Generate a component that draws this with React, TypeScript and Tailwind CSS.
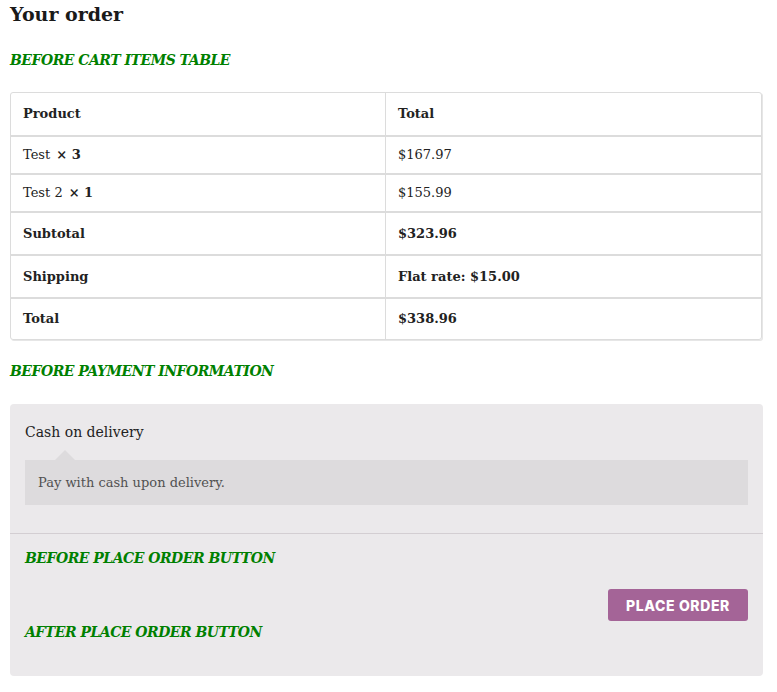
import React from "react";

const serif = { fontFamily: '"DejaVu Serif", "Liberation Serif", serif' };

function Hook({ children, className = "" }: { children: React.ReactNode; className?: string }) {
  return (
    <div className={`text-[14px] font-bold italic text-[#008000] tracking-[-0.5px] leading-[20px] ${className}`}>{children}</div>
  );
}

export default function App() {
  const rows: { l: React.ReactNode; r: React.ReactNode; bold?: boolean; h: string }[] = [
    { l: "Product", r: "Total", bold: true, h: "h-[42px]" },
    { l: <>Test <b className="ml-[6px]">× 3</b></>, r: "$167.97", h: "h-[38px]" },
    { l: <>Test 2 <b className="ml-[6px]">× 1</b></>, r: "$155.99", h: "h-[38px]" },
    { l: "Subtotal", r: "$323.96", bold: true, h: "h-[43px]" },
    { l: "Shipping", r: "Flat rate: $15.00", bold: true, h: "h-[43px]" },
    { l: "Total", r: "$338.96", bold: true, h: "h-[42px]" },
  ];
  return (
    <div className="w-[777px] h-[692px] bg-white px-[10px] text-[#222]" style={serif}>
      <h1 className="text-[19px] font-bold leading-[28px] pt-0 text-[#1a1a1a]">Your order</h1>
      <Hook className="mt-[22px]">BEFORE CART ITEMS TABLE</Hook>
      <div className="mt-[22px] w-[752px] border border-[#dcdcdc] rounded-[3px] shadow-[1px_1px_0_#e6e6e6] overflow-hidden">
        {rows.map((r, i) => (
          <div key={i} className={`flex ${r.h} ${i > 0 ? "border-t-2 border-[#dcdcdc]" : ""} text-[13px] text-[#222]`}>
            <div className={`w-[375px] border-r border-[#dcdcdc] flex items-center pl-[12px] ${r.bold ? "font-bold" : ""}`}>{r.l}</div>
            <div className={`flex-1 flex items-center pl-[12px] ${r.bold ? "font-bold" : ""}`}>{r.r}</div>
          </div>
        ))}
      </div>
      <Hook className="mt-[21px]">BEFORE PAYMENT INFORMATION</Hook>
      <div className="mt-[23px] w-[753px] h-[272px] bg-[#ebe9eb] rounded-[4px] flex flex-col">
        <div className="px-[15px] pt-[18px] pb-[28px] border-b border-[#d3ced2]">
          <div className="text-[14px] text-[#222] leading-[20px]">Cash on delivery</div>
          <div className="relative mt-[18px] bg-[#dddbdd] h-[45px] flex items-center px-[13px] text-[13px] text-[#515151]">
            <div className="absolute -top-[10px] left-[30px] w-0 h-0 border-l-[10px] border-r-[10px] border-b-[10px] border-l-transparent border-r-transparent border-b-[#dddbdd]" />
            Pay with cash upon delivery.
          </div>
        </div>
        <div className="px-[15px] pt-[14px] flex flex-col">
          <Hook>BEFORE PLACE ORDER BUTTON</Hook>
          <div className="flex justify-end mt-[21px]">
            <button
              className="h-[32px] w-[140px] rounded-[3px] bg-[#a46497] text-white text-[14px] font-extrabold tracking-[0.6px]"
              style={{ fontFamily: 'Inter, "Open Sans", sans-serif' }}
            >
              PLACE ORDER
            </button>
          </div>
          <Hook className="mt-[1px]">AFTER PLACE ORDER BUTTON</Hook>
        </div>
      </div>
    </div>
  );
}
